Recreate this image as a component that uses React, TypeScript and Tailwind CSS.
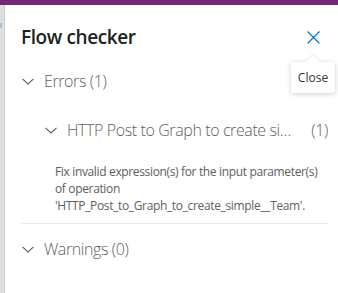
import React from 'react';

function Chevron({ className = '' }: { className?: string }) {
  return (
    <svg className={className} width="12" height="7" viewBox="0 0 12 7" fill="none">
      <path d="M0.5 0.8 L6 6 L11.5 0.8" stroke="#605e5c" strokeWidth="1.1" />
    </svg>
  );
}

export default function App() {
  const font = { fontFamily: '"Open Sans", "Noto Sans", sans-serif' };
  return (
    <div className="relative w-[338px] h-[293px] overflow-hidden bg-white flex flex-col" style={font}>
      <div className="h-[5px] bg-[#742774]" />
      <div className="flex flex-1">
        {/* left edge of the canvas behind the panel */}
        <div className="relative w-[5px] shrink-0 bg-[#dedede] border-r border-[#d0d0d0]">
          <div className="absolute left-0 top-[18px] w-[2px] h-[5px] bg-[#9cc3e8]" />
        </div>
        <div className="flex-1 min-w-0 pl-[16px] pr-[9px]">
          {/* Header */}
          <div className="flex items-center justify-between h-[28px] mt-[18px]">
            <h2 className="text-[19px] leading-[28px] font-semibold tracking-[-0.4px] text-[#201f1e]">Flow checker</h2>
            <button className="mr-[9px] w-[14px] h-[14px] flex items-center justify-center">
              <svg width="13" height="13" viewBox="0 0 13 13" fill="none">
                <path d="M0.5 0.5 L12.5 12.5 M12.5 0.5 L0.5 12.5" stroke="#0078d4" strokeWidth="1.2" />
              </svg>
            </button>
          </div>

          {/* Errors */}
          <div className="flex items-center h-[22px] mt-[19px] text-[16px] font-light tracking-[-0.4px] text-[#605e5c]">
            <Chevron className="ml-[1px]" />
            <span className="ml-[10px] leading-[22px]">Errors (1)</span>
          </div>

          <div className="flex items-center h-[22px] mt-[27px] ml-[24px] text-[16px] font-light tracking-[-0.4px] text-[#605e5c]">
            <Chevron className="shrink-0" />
            <span className="ml-[10px] flex-1 min-w-0 leading-[22px] whitespace-nowrap overflow-hidden text-ellipsis">
              HTTP Post to Graph to create simple Team
            </span>
            <span className="ml-[14px] mr-[1px] leading-[22px] shrink-0">(1)</span>
          </div>

          <p className="mt-[22px] ml-[34px] text-[12px] leading-[17px] tracking-[-0.35px] text-[#605e5c]">
            Fix invalid expression(s) for the input parameter(s) of operation 'HTTP_Post_to_Graph_to_create_simple__Team'.
          </p>

          <div className="mt-[9px] h-px bg-[#edebe9]" />

          {/* Warnings */}
          <div className="flex items-center h-[22px] mt-[14px] text-[16px] font-light tracking-[-0.4px] text-[#605e5c]">
            <Chevron className="ml-[1px]" />
            <span className="ml-[10px] leading-[22px]">Warnings (0)</span>
          </div>
        </div>
      </div>

      {/* Tooltip */}
      <div className="absolute left-[291px] top-[62px] w-[44px] h-[31px] bg-white rounded-[2px] shadow-[0_1px_5px_rgba(0,0,0,0.2)] flex items-center justify-center text-[12px] text-[#323130]">
        <div className="absolute -top-[5px] left-[17px] w-[10px] h-[10px] bg-white rotate-45 shadow-[-1px_-1px_2px_rgba(0,0,0,0.08)]" />
        <span className="relative">Close</span>
      </div>
    </div>
  );
}
